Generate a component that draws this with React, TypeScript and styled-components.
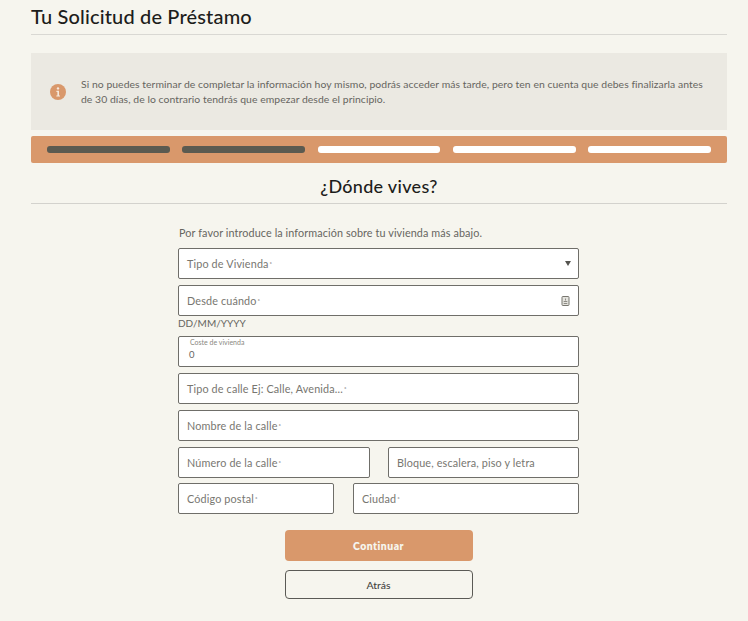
import React from 'react';
import styled, { createGlobalStyle } from 'styled-components';

const GlobalStyle = createGlobalStyle`
  html, body { margin: 0; padding: 0; background: #f6f5ee; }
  body { font-family: "Lato", "Open Sans", sans-serif; color: #1d1d1b; }
  * { box-sizing: border-box; }
`;

// --- Styled Components ---
const Page = styled.div`
  width: 748px; height: 621px; padding: 0 21px 0 31px; overflow: hidden;
`;
const PageTitle = styled.h1`
  margin: 0; height: 35px; padding-top: 4px; font-size: 20px; line-height: 24px; font-weight: 500;
  letter-spacing: 0.15px; color: #1d1d1b; border-bottom: 1px solid #d9d8d3;
`;
const Notice = styled.div`
  margin-top: 18px; height: 77px; padding: 0 18px 0 19px; background: #ebe9e2;
  display: flex; align-items: center; gap: 15px;
`;
const InfoIcon = styled.svg`
  width: 16px; height: 16px; flex: none;
`;
const NoticeText = styled.p`
  margin: 0; font-size: 10.4px; line-height: 15px; font-weight: 400; color: #66655f; letter-spacing: 0.05px;
`;
const Progress = styled.div`
  margin-top: 6px; height: 27px; padding: 0 16px; background: #d9986b; border-radius: 2px;
  display: flex; align-items: center; gap: 12.5px;
`;
const Step = styled.div<{ $done?: boolean }>`
  flex: 1; height: 6.5px; border-radius: 3px; background: ${({ $done }) => ($done ? '#5b5a50' : '#ffffff')};
`;
const SectionTitle = styled.h2`
  margin: 0; height: 41px; padding-top: 12px; text-align: center; font-size: 18px; line-height: 22px;
  font-weight: 500; letter-spacing: 0.3px; color: #1d1d1b; border-bottom: 1px solid #d3d2cd;
`;
const Form = styled.form`
  width: 401px; margin: 0 0 0 147px; display: flex; flex-direction: column;
`;
const Intro = styled.p`
  margin: 22px 0 8px 1px; font-size: 10.8px; line-height: 14px; font-weight: 400; color: #66655f; letter-spacing: 0.1px;
`;
const Field = styled.div<{ $mt?: number; $basis?: number }>`
  position: relative; height: 31px; margin-top: ${({ $mt }) => $mt ?? 6}px;
  padding: 0 9px 0 8px; background: #fff; border: 1px solid #6f6e69; border-radius: 2px;
  display: flex; align-items: center; justify-content: space-between;
  font-size: 10.8px; font-weight: 400; color: #777670; letter-spacing: 0.15px;
  ${({ $basis }) => ($basis ? `flex: 0 0 ${$basis}px;` : 'flex: 1;')}
`;
const SingleField = styled(Field)`
  flex: none;
`;
const Req = styled.span`
  font-size: 6px; vertical-align: 2px; margin-left: 1px; color: #55544f;
`;
const Hint = styled.div`
  margin-top: 1px; height: 13px; font-size: 10px; line-height: 13px; color: #66655f;
`;
const FloatLabel = styled.span`
  position: absolute; left: 11px; top: 1px; font-size: 7px; line-height: 9px; letter-spacing: 0; color: #8a8982;
`;
const FloatValue = styled.span`
  padding: 6px 0 0 2px; font-size: 9.5px; color: #66655f;
`;
const Row = styled.div<{ $gap: number; $mt: number }>`
  display: flex; gap: ${({ $gap }) => $gap}px; margin-top: ${({ $mt }) => $mt}px;
`;
const Caret = styled.span`
  width: 0; height: 0; border-left: 3px solid transparent; border-right: 3px solid transparent;
  border-top: 5px solid #55544f; margin-right: -2px;
`;
const CalendarIcon = styled.svg`
  width: 9px; height: 10px; margin-right: -1px;
`;
const Actions = styled.div`
  margin-top: 16px; display: flex; flex-direction: column; align-items: center; gap: 9px;
`;
const Button = styled.button<{ $primary?: boolean }>`
  width: 188px; height: ${({ $primary }) => ($primary ? 31 : 29)}px; border-radius: 4px; cursor: pointer;
  font-family: inherit; font-size: 10.4px; padding: 0;
  font-weight: ${({ $primary }) => ($primary ? 800 : 500)};
  letter-spacing: ${({ $primary }) => ($primary ? 0.5 : 0)}px;
  color: ${({ $primary }) => ($primary ? '#f6f5ee' : '#44433f')};
  background: ${({ $primary }) => ($primary ? '#d9986b' : 'transparent')};
  border: ${({ $primary }) => ($primary ? 'none' : '1px solid #5b5a55')};
`;

const App = () => (
  <Page>
    <GlobalStyle />
    <PageTitle>Tu Solicitud de Préstamo</PageTitle>
    <Notice>
      <InfoIcon viewBox="0 0 16 16">
        <circle cx="8" cy="8" r="8" fill="#d9986b" />
        <circle cx="8" cy="4.4" r="1.2" fill="#f6e9dd" />
        <path d="M6.4 6.8H9v4.6h1v1.1H6.3v-1.1h1.1V7.9h-1z" fill="#f6e9dd" />
      </InfoIcon>
      <NoticeText>
        Si no puedes terminar de completar la información hoy mismo, podrás acceder más tarde, pero ten en cuenta que debes finalizarla antes de 30 días, de lo contrario tendrás que empezar desde el principio.
      </NoticeText>
    </Notice>
    <Progress>
      <Step $done />
      <Step $done />
      <Step />
      <Step />
      <Step />
    </Progress>
    <SectionTitle>¿Dónde vives?</SectionTitle>
    <Form>
      <Intro>Por favor introduce la información sobre tu vivienda más abajo.</Intro>
      <SingleField $mt={0}>
        <span>Tipo de Vivienda<Req>*</Req></span>
        <Caret />
      </SingleField>
      <SingleField>
        <span>Desde cuándo<Req>*</Req></span>
        <CalendarIcon viewBox="0 0 9 10">
          <rect x="1" y="0.5" width="7" height="9" rx="0.8" fill="#e4e3de" stroke="#77766f" />
          <path d="M4.5 2.5v2M2.7 5.5h3.6M2.7 7.5h3.6" stroke="#77766f" strokeWidth="0.8" />
        </CalendarIcon>
      </SingleField>
      <Hint>DD/MM/YYYY</Hint>
      <SingleField>
        <FloatLabel>Coste de vivienda</FloatLabel>
        <FloatValue>0</FloatValue>
      </SingleField>
      <SingleField>
        <span>Tipo de calle Ej: Calle, Avenida...<Req>*</Req></span>
      </SingleField>
      <SingleField>
        <span>Nombre de la calle<Req>*</Req></span>
      </SingleField>
      <Row $gap={18} $mt={0}>
        <Field $basis={192}>
          <span>Número de la calle<Req>*</Req></span>
        </Field>
        <Field>
          <span>Bloque, escalera, piso y letra</span>
        </Field>
      </Row>
      <Row $gap={19} $mt={5}>
        <Field $mt={0} $basis={156}>
          <span>Código postal<Req>*</Req></span>
        </Field>
        <Field $mt={0}>
          <span>Ciudad<Req>*</Req></span>
        </Field>
      </Row>
      <Actions>
        <Button type="button" $primary>Continuar</Button>
        <Button type="button">Atrás</Button>
      </Actions>
    </Form>
  </Page>
);

export default App;
